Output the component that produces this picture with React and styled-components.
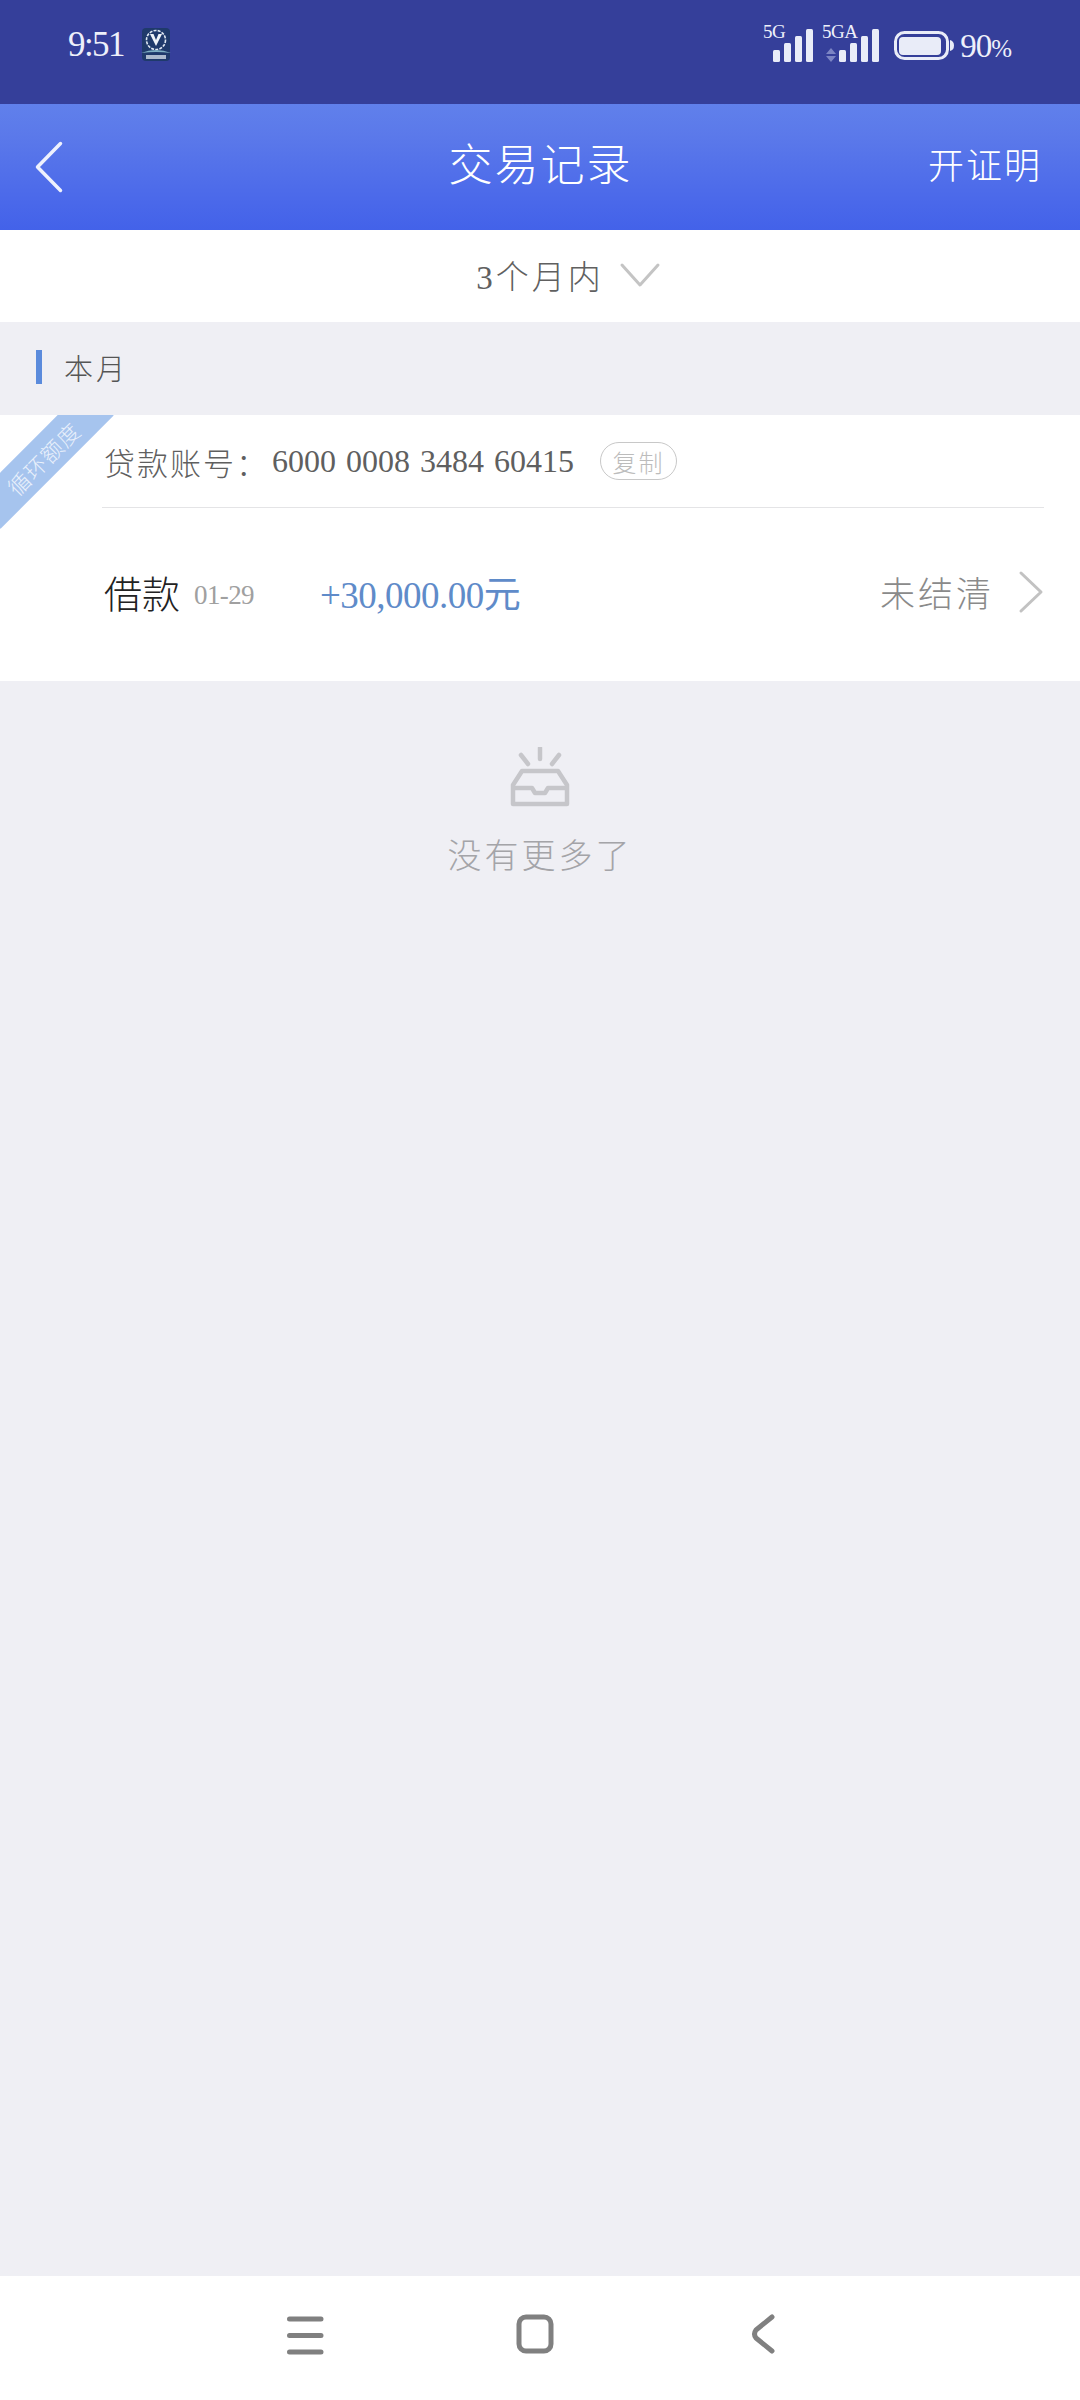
import React from 'react';
import styled, { createGlobalStyle } from 'styled-components';

const GlobalStyle = createGlobalStyle`
	html, body {
		margin: 0;
		padding: 0;
		background: #efeff4;
	}
	* {
		box-sizing: border-box;
	}
`;

const FONT = `"Liberation Serif", "Noto Sans CJK SC", serif`;

const Screen = styled.div`
	display: flex;
	flex-direction: column;
	width: 1080px;
	height: 2400px;
	overflow: hidden;
	background: #efeff4;
	font-family: ${FONT};
`;

const StatusBar = styled.div`
	display: flex;
	align-items: flex-start;
	justify-content: space-between;
	height: 104px;
	padding: 24px 0 0 68px;
	background: #353f9a;
	color: #eef0fa;
`;

const StatusLeft = styled.div`
	display: flex;
	align-items: center;
	gap: 16px;
`;

const Clock = styled.span`
	font-size: 35px;
	line-height: 42px;
	letter-spacing: -1.6px;
`;

const StatusRight = styled.div`
	display: flex;
	align-items: flex-start;
	margin-top: -6px;
	padding-right: 69px;
`;

const BatteryBox = styled.svg`
	margin-top: 13px;
`;

const Percent = styled.span`
	margin-left: 6px;
	margin-top: 8px;
	font-size: 33px;
	line-height: 40px;
	letter-spacing: -1px;

	small {
		font-size: 25px;
	}
`;

const Header = styled.div`
	display: flex;
	align-items: center;
	justify-content: space-between;
	height: 126px;
	padding: 0 38px 0 34px;
	background: linear-gradient(180deg, #6080eb 0%, #5b79ea 25%, #4a68ea 78%, #4362e9 100%);
	color: #fff;
`;

const HeaderSide = styled.div`
	display: flex;
	justify-content: ${props => (props.$right ? 'flex-end' : 'flex-start')};
	width: 220px;
`;

const Title = styled.div`
	font-size: 44px;
	font-weight: 300;
	letter-spacing: 2px;
	line-height: 60px;
	margin-left: 5px;
`;

const HeaderAction = styled.div`
	font-size: 36px;
	font-weight: 300;
	letter-spacing: 2px;
	line-height: 50px;
`;

const FilterBar = styled.div`
	display: flex;
	align-items: center;
	justify-content: center;
	gap: 15px;
	height: 92px;
	padding: 0 0 3px 57px;
	background: #fff;
	color: #606060;
`;

const FilterLabel = styled.span`
	font-size: 33px;
	font-weight: 300;
	letter-spacing: 3px;
`;

const SectionHead = styled.div`
	display: flex;
	align-items: center;
	gap: 22px;
	height: 93px;
	padding: 0 0 3px 36px;
`;

const SectionMark = styled.span`
	width: 6px;
	height: 34px;
	background: #5b8bdc;
`;

const SectionTitle = styled.span`
	font-size: 29px;
	font-weight: 300;
	letter-spacing: 3px;
	color: #555;
`;

const Card = styled.div`
	position: relative;
	overflow: hidden;
	height: 266px;
	padding: 0 36px 0 102px;
	background: #fff;
`;

const Ribbon = styled.div`
	position: absolute;
	left: -37px;
	top: 23px;
	width: 160px;
	height: 40px;
	display: flex;
	align-items: center;
	justify-content: center;
	transform: rotate(-45deg);
	background: #a6c4ee;
	color: #e9f0fb;
	font-size: 22px;
	font-weight: 300;
	letter-spacing: 1px;
`;

const AccountRow = styled.div`
	display: flex;
	align-items: center;
	height: 93px;
	padding-left: 2px;
	border-bottom: 1px solid #e4e4e6;
	color: #5f5f5f;
`;

const AccountLabel = styled.span`
	font-size: 31px;
	font-weight: 300;
	letter-spacing: 2px;
	width: 168px;
	white-space: nowrap;
`;

const AccountNumber = styled.span`
	font-size: 32px;
	word-spacing: 2px;
	white-space: pre;
`;

const CopyButton = styled.span`
	display: flex;
	align-items: center;
	justify-content: center;
	width: 77px;
	height: 38px;
	margin-left: 26px;
	border: 1px solid #c8c8c8;
	border-radius: 19px;
	color: #bcbcbc;
	font-size: 24px;
	font-weight: 300;
	letter-spacing: 2px;
`;

const TradeRow = styled.div`
	display: flex;
	align-items: center;
	height: 173px;
	padding: 0 0 6px 2px;
`;

const TradeName = styled.span`
	font-size: 38px;
	font-weight: 300;
	color: #222;
	width: 90px;
`;

const TradeDate = styled.span`
	font-size: 27px;
	color: #a0a0a0;
	letter-spacing: -0.6px;
	margin-top: 8px;
	width: 126px;
`;

const Amount = styled.span`
	font-size: 37px;
	color: #5f8bc9;
	letter-spacing: -0.5px;
`;

const TradeStatus = styled.span`
	margin-left: auto;
	font-size: 35px;
	font-weight: 300;
	letter-spacing: 3px;
	color: #8a8a8a;
`;

const TradeArrow = styled.span`
	display: flex;
	margin-left: 24px;
`;

const Empty = styled.div`
	display: flex;
	flex: 1;
	flex-direction: column;
	align-items: center;
	padding-top: 66px;
	color: #a4a4a8;
`;

const EmptyText = styled.div`
	margin-top: 26px;
	font-size: 34px;
	font-weight: 300;
	letter-spacing: 3px;
	line-height: 48px;
`;

const NavBar = styled.div`
	display: flex;
	align-items: flex-start;
	height: 124px;
	padding: 38px 0 0 285px;
	background: #fff;
`;

const NavButton = styled.span`
	display: flex;
	margin-right: ${props => props.$gap}px;
`;

function Logo() {
	return (
		<svg width="32" height="34" viewBox="0 0 32 34">
			<rect x="2" y="0" width="28" height="33" rx="4" fill="#1f3a6b" />
			<circle cx="16" cy="12" r="9.5" fill="none" stroke="#dfe8f2" strokeWidth="1.6" strokeDasharray="3 1.2" />
			<path d="M10 6 L16 18 L22 6 L18.5 6 L16 12 L13.5 6 Z" fill="#eef3f8" />
			<path d="M1 25 Q16 19 31 25 Q16 23 1 25 Z" fill="#7fb0c4" />
			<rect x="6" y="27" width="20" height="4" fill="#cfdbe6" opacity="0.8" />
		</svg>
	);
}

function Signal({ label, width, offset, arrows }) {
	const bars = [
		[0, 12],
		[11, 19],
		[22, 26],
		[33, 33],
	];
	return (
		<svg width={width} height="48" viewBox={`0 0 ${width} 48`}>
			<text x="0" y="20" fontFamily={FONT} fontSize="19" fill="#eef0fa" letterSpacing="-0.5">{label}</text>
			{arrows && <path d="M9 30 L14 36 L4 36 Z M9 44 L14 38 L4 38 Z" fill="#7c85c4" />}
			{bars.map(([x, h]) => (
				<rect key={x} x={offset + x} y={44 - h} width="7" height={h} rx="1.5" fill="#e9ecf8" />
			))}
		</svg>
	);
}

function Battery() {
	return (
		<BatteryBox width="60" height="29" viewBox="0 0 60 29">
			<rect x="1.5" y="1.5" width="52" height="26" rx="9" fill="none" stroke="#e9ecf8" strokeWidth="3" />
			<rect x="5" y="6" width="42" height="18" rx="4" fill="#e9ecf8" />
			<path d="M56 9 Q60 10 60 14.500 Q60 19 56 20 Z" fill="#e9ecf8" />
		</BatteryBox>
	);
}

function Chevron({ dir, width, height, color, stroke }) {
	const pad = stroke;
	const w = width - pad;
	const h = height - pad;
	const paths = {
		left: `M${w} ${pad} L${pad} ${height / 2} L${w} ${h}`,
		right: `M${pad} ${pad} L${w} ${height / 2} L${pad} ${h}`,
		down: `M${pad} ${pad} L${width / 2} ${h} L${w} ${pad}`,
	};
	return (
		<svg width={width} height={height} viewBox={`0 0 ${width} ${height}`}>
			<path d={paths[dir]} fill="none" stroke={color} strokeWidth={stroke} strokeLinecap="round" strokeLinejoin="round" />
		</svg>
	);
}

function EmptyIcon() {
	return (
		<svg width="60" height="60" viewBox="0 0 60 60" fill="none" stroke="#c6c6ca" strokeWidth="4.5">
			<path d="M30 1 V12 M11 8 L18 17 M49 8 L42 17" strokeLinecap="round" />
			<path d="M12 24 H48 L57 38 V57 H3 V38 Z" strokeLinejoin="round" />
			<path d="M3 41 H22 L25 46 H35 L38 41 H57" strokeLinejoin="round" />
		</svg>
	);
}

function MenuIcon() {
	return (
		<svg width="40" height="44" viewBox="0 0 40 44" fill="none" stroke="#808080" strokeWidth="5" strokeLinecap="round">
			<path d="M4.5 5 H36 M4.500 21.500 H36 M4.500 38 H36" />
		</svg>
	);
}

function HomeIcon() {
	return (
		<svg width="38" height="40" viewBox="0 0 38 40" fill="none" stroke="#808080" strokeWidth="5">
			<rect x="3" y="3" width="32" height="34" rx="7" />
		</svg>
	);
}

function BackIcon() {
	return (
		<svg width="24" height="40" viewBox="0 0 24 40" fill="none" stroke="#808080" strokeWidth="5" strokeLinecap="round" strokeLinejoin="round">
			<path d="M21 3 L5 16 Q2 20 5 24 L21 37" />
		</svg>
	);
}

export default function App() {
	return (
		<Screen>
			<GlobalStyle />
			<StatusBar>
				<StatusLeft>
					<Clock>9:51</Clock>
					<Logo />
				</StatusLeft>
				<StatusRight>
					<Signal label="5G" width={59} offset={10} />
					<Signal label="5GA" width={72} offset={17} arrows />
					<Battery />
					<Percent>90<small>%</small></Percent>
				</StatusRight>
			</StatusBar>
			<Header>
				<HeaderSide>
					<Chevron dir="left" width={30} height={54} color="#eef1fd" stroke={3.5} />
				</HeaderSide>
				<Title>交易记录</Title>
				<HeaderSide $right>
					<HeaderAction>开证明</HeaderAction>
				</HeaderSide>
			</Header>
			<FilterBar>
				<FilterLabel>3个月内</FilterLabel>
				<Chevron dir="down" width={42} height={26} color="#c4c4c4" stroke={3} />
			</FilterBar>
			<SectionHead>
				<SectionMark />
				<SectionTitle>本月</SectionTitle>
			</SectionHead>
			<Card>
				<Ribbon>循环额度</Ribbon>
				<AccountRow>
					<AccountLabel>贷款账号：</AccountLabel>
					<AccountNumber>6000 0008 3484 60415</AccountNumber>
					<CopyButton>复制</CopyButton>
				</AccountRow>
				<TradeRow>
					<TradeName>借款</TradeName>
					<TradeDate>01-29</TradeDate>
					<Amount>+30,000.00元</Amount>
					<TradeStatus>未结清</TradeStatus>
					<TradeArrow>
						<Chevron dir="right" width={26} height={44} color="#c2c2c2" stroke={3} />
					</TradeArrow>
				</TradeRow>
			</Card>
			<Empty>
				<EmptyIcon />
				<EmptyText>没有更多了</EmptyText>
			</Empty>
			<NavBar>
				<NavButton $gap={191}><MenuIcon /></NavButton>
				<NavButton $gap={197}><HomeIcon /></NavButton>
				<NavButton $gap={0}><BackIcon /></NavButton>
			</NavBar>
		</Screen>
	);
}
